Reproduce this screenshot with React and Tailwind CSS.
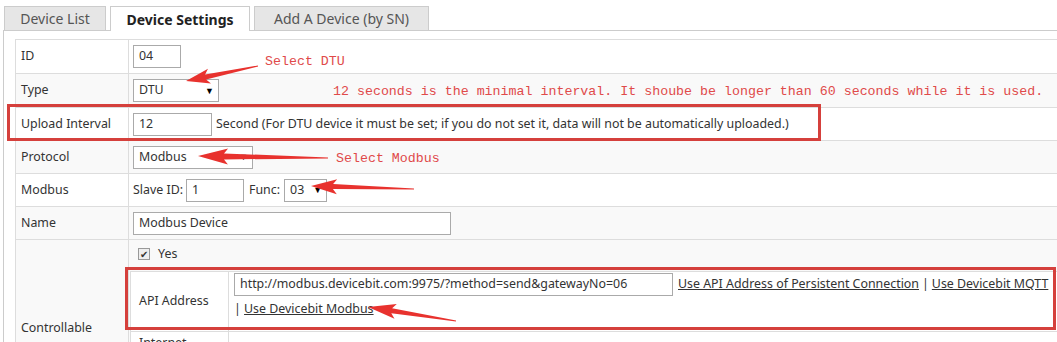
import React from 'react';

const ui = { fontFamily: '"Noto Sans", "Open Sans", Arial, sans-serif' };
const mono = { fontFamily: '"Liberation Mono", "Courier New", monospace' };

// build a tapered arrow polygon from tail to tip
const arrowPoints = (x1, y1, x2, y2, headL = 22, headW = 16, body = 5, tail = 1) => {
  const len = Math.hypot(x2 - x1, y2 - y1);
  const dx = (x2 - x1) / len;
  const dy = (y2 - y1) / len;
  const nx = -dy;
  const ny = dx;
  const neckX = x2 - dx * headL;
  const neckY = y2 - dy * headL;
  const barbX = neckX - dx * 4;
  const barbY = neckY - dy * 4;
  const pts = [
    [x1 + nx * tail / 2, y1 + ny * tail / 2],
    [neckX + nx * body / 2, neckY + ny * body / 2],
    [barbX + nx * headW / 2, barbY + ny * headW / 2],
    [x2, y2],
    [barbX - nx * headW / 2, barbY - ny * headW / 2],
    [neckX - nx * body / 2, neckY - ny * body / 2],
    [x1 - nx * tail / 2, y1 - ny * tail / 2],
  ];
  return pts.map((p) => p.map((v) => v.toFixed(1)).join(',')).join(' ');
};

const arrows = [
  [258, 66, 186, 81, 20, 15, 5],
  [328, 158, 198, 156, 26, 16, 6],
  [414, 189, 311, 186, 22, 15, 5],
  [456, 321, 368, 307, 24, 15, 5],
];

const Row = ({ label, h = 'h-[33px]', bg = 'bg-white', children }) => (
  <div className={`flex border-b border-[#ddd] ${h} ${bg}`}>
    <div className="w-[113px] shrink-0 border-r border-[#ddd] pl-[5px] flex items-center">{label}</div>
    <div className="flex-1 pl-[4px] flex items-center">{children}</div>
  </div>
);

const Select = ({ value, w }) => (
  <div className={`${w} h-[23px] border border-[#aaa] bg-white flex items-center justify-between pl-[5px] pr-[4px]`}>
    <span>{value}</span>
    <span className="text-[9px] text-black">▼</span>
  </div>
);

const Input = ({ value, w }) => (
  <div className={`${w} h-[23px] border border-[#aaa] bg-white flex items-center pl-[5px]`}>{value}</div>
);

export default function App() {
  return (
    <div className="relative w-[1057px] h-[342px] overflow-hidden bg-white text-[12.4px] text-[#333]" style={ui}>
      {/* tabs */}
      <div className="flex items-end gap-[4px] pl-[4px] pt-[6px] h-[30px] text-[14px]">
        <div className="w-[102px] h-[24px] bg-[#e6e6e6] border border-[#ccc] border-b-0 flex items-center justify-center text-[#555]">Device List</div>
        <div className="relative z-10 w-[140px] h-[25px] bg-white border border-[#ccc] border-b-0 flex items-center justify-center font-bold text-[#222] -mb-px">Device Settings</div>
        <div className="w-[175px] h-[24px] bg-[#e6e6e6] border border-[#ccc] border-b-0 flex items-center justify-center text-[#555]">Add A Device (by SN)</div>
      </div>

      {/* panel */}
      <div className="ml-[3px] border-l border-t border-[#ccc] pl-[11px] pt-[8px] h-[320px]">
        <div className="w-[1080px] border-t border-l border-[#ddd]">
          <Row label="ID" h="h-[34px]">
            <Input value="04" w="w-[48px]" />
          </Row>
          <Row label="Type" h="h-[34px]" bg="bg-[#f9f9f9]">
            <Select value="DTU" w="w-[86px]" />
          </Row>
          <Row label="Upload Interval">
            <Input value="12" w="w-[79px]" />
            <span className="ml-[4px]">Second (For DTU device it must be set; if you do not set it, data will not be automatically uploaded.)</span>
          </Row>
          <Row label="Protocol" bg="bg-[#f9f9f9]">
            <Select value="Modbus" w="w-[120px]" />
          </Row>
          <Row label="Modbus">
            <span>Slave ID:</span>
            <div className="ml-[3px]"><Input value="1" w="w-[58px]" /></div>
            <span className="ml-[5px]">Func:</span>
            <div className="ml-[4px]"><Select value="03" w="w-[43px]" /></div>
          </Row>
          <Row label="Name" bg="bg-[#f9f9f9]">
            <Input value="Modbus Device" w="w-[318px]" />
          </Row>
          <div className="flex h-[176px] bg-[#f9f9f9]">
            <div className="w-[113px] shrink-0 border-r border-[#ddd] pl-[5px] flex items-center">Controllable</div>
            <div className="flex-1 pl-[1px] pt-[6px]">
              <div className="flex items-center h-[16px] pl-[8px]">
                <div className="w-[12px] h-[12px] border border-[#999] bg-[#eee] flex items-center justify-center text-[10px] leading-none text-[#333]">✔</div>
                <span className="ml-[8px]">Yes</span>
              </div>
              <div className="mt-[9px] border border-[#ddd] bg-white">
                <div className="flex h-[60px] border-b border-[#ddd]">
                  <div className="w-[98px] shrink-0 border-r border-[#ddd] pl-[8px] flex items-center">API Address</div>
                  <div className="flex-1 pl-[5px] pt-[1px]">
                    <div className="flex items-center">
                      <Input value="http://modbus.devicebit.com:9975/?method=send&gatewayNo=06" w="w-[439px]" />
                      <span className="ml-[5px] underline">Use API Address of Persistent Connection</span>
                      <span className="mx-[3px]">|</span>
                      <span className="underline">Use Devicebit MQTT</span>
                    </div>
                    <div className="mt-[4px]">
                      | <span className="underline">Use Devicebit Modbus</span>
                    </div>
                  </div>
                </div>
                <div className="flex h-[40px]">
                  <div className="w-[98px] shrink-0 border-r border-[#ddd] pl-[8px] pt-[2px]">Internet</div>
                  <div className="flex-1" />
                </div>
              </div>
            </div>
          </div>
        </div>
      </div>

      {/* annotations */}
      <div className="absolute left-[265px] top-[52px] text-[13.3px] text-[#e04a4a]" style={mono}>Select DTU</div>
      <div className="absolute left-[333px] top-[82px] text-[13.3px] text-[#e04a4a]" style={mono}>12 seconds is the minimal interval. It shoube be longer than 60 seconds while it is used.</div>
      <div className="absolute left-[336px] top-[149px] text-[13.3px] text-[#e04a4a]" style={mono}>Select Modbus</div>
      <div className="absolute left-[7px] top-[104px] w-[814px] h-[37px] border-[3px] border-[#d5403c] pointer-events-none" />
      <div className="absolute left-[125px] top-[267px] w-[931px] h-[63px] border-[3px] border-[#d5403c] pointer-events-none" />
      <svg className="absolute inset-0 pointer-events-none" width="1057" height="342">
        {arrows.map((a, i) => (
          <polygon key={i} points={arrowPoints(...a)} fill="#e8322e" />
        ))}
      </svg>
    </div>
  );
}
